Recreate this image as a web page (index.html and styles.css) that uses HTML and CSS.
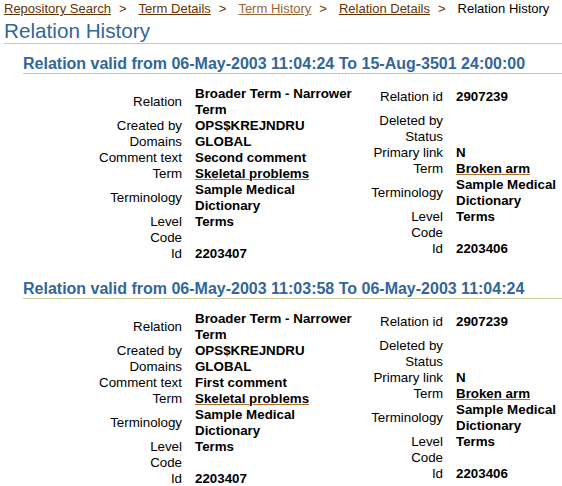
FILE: index.html
```html
<!DOCTYPE html>
<html>
<head>
<meta charset="utf-8">
<link rel="stylesheet" href="styles.css">
</head>
<body>
<div class="crumbs">
  <a class="crumb" href="#">Repository Search</a><span class="sep">&gt;</span><a class="crumb" href="#">Term Details</a><span class="sep">&gt;</span><a class="crumb visited" href="#">Term History</a><span class="sep">&gt;</span><a class="crumb" href="#">Relation Details</a><span class="sep">&gt;</span><span class="current">Relation History</span>
</div>
<h1 class="title">Relation History</h1>

<section class="sect">
  <h2 class="subhead">Relation valid from 06-May-2003 11:04:24 To 15-Aug-3501 24:00:00</h2>
  <div class="cols">
    <div class="col col-left">
      <div class="lbl">Relation</div><div class="val">Broader Term - Narrower Term</div>
      <div class="lbl">Created by</div><div class="val">OPS$KREJNDRU</div>
      <div class="lbl">Domains</div><div class="val">GLOBAL</div>
      <div class="lbl">Comment text</div><div class="val">Second comment</div>
      <div class="lbl">Term</div><div class="val"><a class="vlink" href="#">Skeletal problems</a></div>
      <div class="lbl">Terminology</div><div class="val">Sample Medical Dictionary</div>
      <div class="lbl">Level</div><div class="val">Terms</div>
      <div class="lbl">Code</div><div class="val"></div>
      <div class="lbl">Id</div><div class="val">2203407</div>
    </div>
    <div class="col col-right">
      <div class="lbl first">Relation id</div><div class="val first">2907239</div>
      <div class="lbl">Deleted by</div><div class="val"></div>
      <div class="lbl">Status</div><div class="val"></div>
      <div class="lbl">Primary link</div><div class="val">N</div>
      <div class="lbl">Term</div><div class="val"><a class="vlink" href="#">Broken arm</a></div>
      <div class="lbl">Terminology</div><div class="val">Sample Medical Dictionary</div>
      <div class="lbl">Level</div><div class="val">Terms</div>
      <div class="lbl">Code</div><div class="val"></div>
      <div class="lbl">Id</div><div class="val">2203406</div>
    </div>
  </div>
</section>

<section class="sect">
  <h2 class="subhead">Relation valid from 06-May-2003 11:03:58 To 06-May-2003 11:04:24</h2>
  <div class="cols">
    <div class="col col-left">
      <div class="lbl">Relation</div><div class="val">Broader Term - Narrower Term</div>
      <div class="lbl">Created by</div><div class="val">OPS$KREJNDRU</div>
      <div class="lbl">Domains</div><div class="val">GLOBAL</div>
      <div class="lbl">Comment text</div><div class="val">First comment</div>
      <div class="lbl">Term</div><div class="val"><a class="vlink" href="#">Skeletal problems</a></div>
      <div class="lbl">Terminology</div><div class="val">Sample Medical Dictionary</div>
      <div class="lbl">Level</div><div class="val">Terms</div>
      <div class="lbl">Code</div><div class="val"></div>
      <div class="lbl">Id</div><div class="val">2203407</div>
    </div>
    <div class="col col-right">
      <div class="lbl first">Relation id</div><div class="val first">2907239</div>
      <div class="lbl">Deleted by</div><div class="val"></div>
      <div class="lbl">Status</div><div class="val"></div>
      <div class="lbl">Primary link</div><div class="val">N</div>
      <div class="lbl">Term</div><div class="val"><a class="vlink" href="#">Broken arm</a></div>
      <div class="lbl">Terminology</div><div class="val">Sample Medical Dictionary</div>
      <div class="lbl">Level</div><div class="val">Terms</div>
      <div class="lbl">Code</div><div class="val"></div>
      <div class="lbl">Id</div><div class="val">2203406</div>
    </div>
  </div>
</section>
</body>
</html>
```

FILE: styles.css
```css
html, body {
  margin: 0;
  background: #ffffff;
}
body {
  padding: 1px 0 0 4px;
  font-family: "Liberation Sans", Arial, sans-serif;
  font-size: 13.33px;
  color: #000000;
}
.crumbs {
  height: 16px;
  font-size: 13px;
  line-height: 16px;
  white-space: nowrap;
}
.crumb {
  color: #663300;
  text-decoration: underline;
}
.crumb.visited {
  color: #996633;
}
.sep {
  color: #663300;
  padding: 0 12px 0 8px;
}
.current {
  color: #000000;
}
.title {
  margin: 2px 0 0 0;
  font-size: 20.7px;
  font-weight: normal;
  line-height: 24px;
  color: #336699;
  border-bottom: 1px solid #cccc99;
}
.sect {
  margin-top: 10px;
}
.sect + .sect {
  margin-top: 17px;
}
.subhead {
  margin: 0 0 12px 19px;
  font-size: 16px;
  font-weight: bold;
  line-height: 19px;
  color: #336699;
  border-bottom: 1px solid #cccc99;
  white-space: nowrap;
}
.cols {
  display: flex;
  align-items: flex-start;
}
.col {
  display: grid;
  column-gap: 13px;
  align-items: center;
  line-height: 16px;
}
.col-left {
  grid-template-columns: 178px 163px;
}
.col-right {
  grid-template-columns: 77px 106px;
  margin-left: 8px;
  padding-top: 3px;
}
.lbl {
  text-align: right;
  white-space: nowrap;
}
.val {
  font-weight: bold;
  min-height: 16px;
}
.first {
  margin-bottom: 8px;
}
.vlink {
  color: #000000;
  text-decoration: underline;
  text-decoration-color: #b0702a;
}
```
